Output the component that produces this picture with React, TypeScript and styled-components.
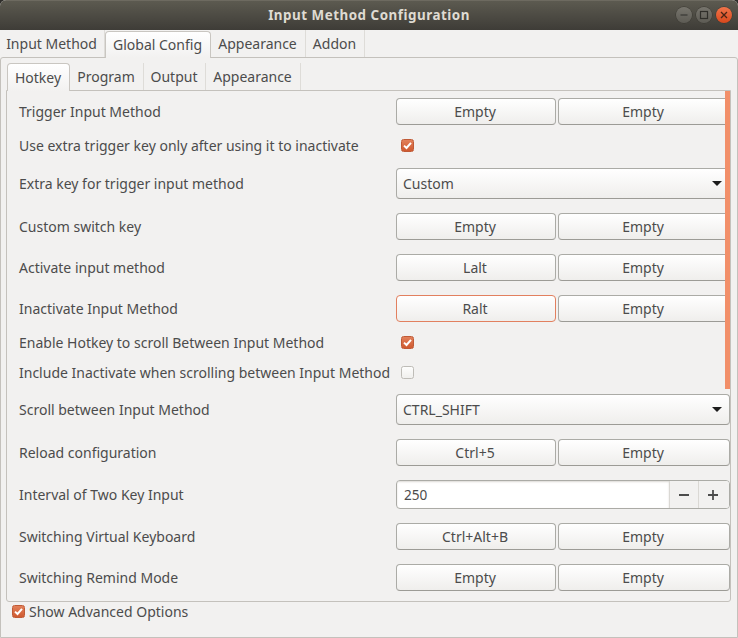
import React from "react";
import styled, { createGlobalStyle } from "styled-components";

const Global = createGlobalStyle`
  html, body { margin: 0; padding: 0; background: #2f2e2b; overflow: hidden; }
  * { box-sizing: border-box; }
`;

const FONT = `"Noto Sans", "Open Sans", sans-serif`;

const Win = styled.div`
  width: 738px;
  height: 638px;
  display: flex;
  flex-direction: column;
  background: #f2f1f0;
  font-family: ${FONT};
  font-size: 14px;
  color: #4c4c4c;
  border-radius: 6px 6px 0 0;
  overflow: hidden;
`;

const TitleBar = styled.div`
  height: 30px;
  flex: none;
  position: relative;
  display: flex;
  align-items: center;
  justify-content: center;
  padding-bottom: 2px;
  background: linear-gradient(#5c5a50, #3e3c37);
  border-top: 1px solid #6d6a60;
`;

const Title = styled.div`
  font-weight: 700;
  font-size: 13.4px;
  letter-spacing: 0.51px;
  color: #dfdbd2;
`;

const WinButtons = styled.div`
  position: absolute;
  right: 6px;
  top: 6px;
  display: flex;
  gap: 4px;
`;

const WinBtn = styled.div<{ $close?: boolean }>`
  width: 16px;
  height: 16px;
  border-radius: 50%;
  background: ${(p) => (p.$close ? "linear-gradient(#f0744a, #d9481c)" : "linear-gradient(#77756d, #5d5b54)")};
  box-shadow: 0 0 0 0.5px #38362f;
  display: flex;
  align-items: center;
  justify-content: center;
`;

const TabStrip = styled.div<{ $inset?: number; $height: number }>`
  display: flex;
  flex: none;
  height: ${(p) => p.$height}px;
  padding-left: ${(p) => p.$inset ?? 0}px;
`;

const Tab = styled.div<{ $active?: boolean; $w: number; $drop?: number }>`
  width: ${(p) => p.$w}px;
  display: flex;
  align-items: center;
  justify-content: center;
  padding-right: 1px;
  padding-bottom: ${(p) => p.$drop ?? 0}px;
  font-size: 14px;
  position: relative;
  z-index: ${(p) => (p.$active ? 1 : 0)};
  margin-top: ${(p) => p.$drop ?? 0}px;
  margin-bottom: ${(p) => (p.$active ? "-1px" : "0")};
  ${(p) =>
    p.$active
      ? `
    background: linear-gradient(#ffffff, #f2f1f0);
    border: 1px solid #c9c6c1;
    border-bottom: none;
    border-radius: 4px 4px 0 0;
  `
      : `
    border-right: 1px solid #dedcd8;
  `}
`;

const OuterPanel = styled.div`
  flex: 1;
  display: flex;
  flex-direction: column;
  border: 1px solid #c4c1bc;
  border-radius: 3px 3px 0 0;
  padding: 5px 6px 0 5px;
  min-height: 0;
`;

const InnerPanel = styled.div`
  height: 512px;
  flex: none;
  position: relative;
  border: 1px solid #c4c1bc;
  border-radius: 0 0 3px 3px;
  padding: 7px 0 0 12px;
  display: flex;
  flex-direction: column;
`;

const Scrollbar = styled.div`
  position: absolute;
  right: 0;
  top: 0;
  width: 5px;
  height: 298px;
  background: #f28f69;
`;

const Row = styled.div<{ $gap: number; $h: number }>`
  display: grid;
  grid-template-columns: 377px 334px;
  align-items: center;
  height: ${(p) => p.$h}px;
  margin-top: ${(p) => p.$gap}px;
  flex: none;
`;

const Label = styled.div`
  white-space: nowrap;
  font-size: 14px;
`;

const KeyPair = styled.div`
  display: grid;
  grid-template-columns: 160px 172px;
  gap: 2px;
  height: 100%;
`;

const KeyButton = styled.div<{ $focus?: boolean }>`
  display: flex;
  align-items: center;
  justify-content: center;
  height: 100%;
  padding-right: 2px;
  border: 1px solid ${(p) => (p.$focus ? "#e2805f" : "#ababa6")};
  border-bottom-color: ${(p) => (p.$focus ? "#e2805f" : "#9c9b96")};
  border-radius: 4px;
  background: linear-gradient(#ffffff, #efeeec);
  font-size: 14px;
`;

const CheckSlot = styled.div`
  padding-left: 5px;
  display: flex;
  align-items: center;
`;

const Box = styled.div<{ $on: boolean }>`
  width: 13px;
  height: 13px;
  border-radius: 2.5px;
  flex: none;
  display: flex;
  align-items: center;
  justify-content: center;
  ${(p) =>
    p.$on
      ? `background: linear-gradient(#e2805a, #cf5a30); border: 1px solid #c05a36;`
      : `background: linear-gradient(#fdfdfc, #f0efed); border: 1px solid #bebcb7;`}
`;

const Combo = styled.div`
  height: 100%;
  display: flex;
  align-items: center;
  justify-content: space-between;
  padding: 0 7px 0 6px;
  border: 1px solid #ababa6;
  border-bottom-color: #9c9b96;
  border-radius: 4px;
  background: linear-gradient(#ffffff, #efeeec);
`;

const Arrow = styled.div`
  width: 0;
  height: 0;
  border-left: 5px solid transparent;
  border-right: 5px solid transparent;
  border-top: 5px solid #1c1c1c;
`;

const Spin = styled.div`
  height: 100%;
  display: flex;
  border: 1px solid #ababa6;
  border-radius: 4px;
  overflow: hidden;
  background: #ffffff;
`;

const SpinValue = styled.div`
  flex: 1;
  display: flex;
  align-items: center;
  padding-left: 7px;
  font-size: 13.6px;
  box-shadow: inset 0 1px 2px #dcdad6;
`;

const SpinBtn = styled.div<{ $w: number; $shift: number }>`
  width: ${(p) => p.$w}px;
  display: flex;
  align-items: center;
  justify-content: center;
  padding-right: ${(p) => p.$shift}px;
  background: #f2f1f0;
  border-left: 1px solid #dad8d4;
`;

const Advanced = styled.div`
  display: flex;
  align-items: center;
  gap: 4px;
  padding-left: 6px;
  height: 19px;
`;

const CheckMark = () => (
  <svg width="11" height="11" viewBox="0 0 11 11">
    <path d="M2 5.6 L4.5 8 L9 2.8" fill="none" stroke="#ffffff" strokeWidth="2" />
  </svg>
);

type Item =
  | { kind: "keys"; label: string; a: string; b: string; gap: number; focus?: boolean }
  | { kind: "check"; label: string; on: boolean; gap: number }
  | { kind: "combo"; label: string; value: string; gap: number }
  | { kind: "spin"; label: string; value: string; gap: number };

const rows: Item[] = [
  { kind: "keys", label: "Trigger Input Method", a: "Empty", b: "Empty", gap: 0 },
  { kind: "check", label: "Use extra trigger key only after using it to inactivate", on: true, gap: 11 },
  { kind: "combo", label: "Extra key for trigger input method", value: "Custom", gap: 14 },
  { kind: "keys", label: "Custom switch key", a: "Empty", b: "Empty", gap: 14 },
  { kind: "keys", label: "Activate input method", a: "Lalt", b: "Empty", gap: 14 },
  { kind: "keys", label: "Inactivate Input Method", a: "Ralt", b: "Empty", gap: 14, focus: true },
  { kind: "check", label: "Enable Hotkey to scroll Between Input Method", on: true, gap: 11 },
  { kind: "check", label: "Include Inactivate when scrolling between Input Method", on: false, gap: 12 },
  { kind: "combo", label: "Scroll between Input Method", value: "CTRL_SHIFT", gap: 13 },
  { kind: "keys", label: "Reload configuration", a: "Ctrl+5", b: "Empty", gap: 14 },
  { kind: "spin", label: "Interval of Two Key Input", value: "250", gap: 14 },
  { kind: "keys", label: "Switching Virtual Keyboard", a: "Ctrl+Alt+B", b: "Empty", gap: 14 },
  { kind: "keys", label: "Switching Remind Mode", a: "Empty", b: "Empty", gap: 14 },
];

const heights = { keys: 27, check: 18, combo: 31, spin: 29 };

export default function App() {
  return (
    <Win>
      <Global />
      <TitleBar>
        <Title>Input Method Configuration</Title>
        <WinButtons>
          <WinBtn>
            <svg width="10" height="10" viewBox="0 0 10 10">
              <path d="M1.5 5 H8.5" stroke="#2f2e2a" strokeWidth="1.2" />
            </svg>
          </WinBtn>
          <WinBtn>
            <svg width="10" height="10" viewBox="0 0 10 10">
              <rect x="1.5" y="1.5" width="7" height="7" fill="none" stroke="#2f2e2a" strokeWidth="1.2" />
            </svg>
          </WinBtn>
          <WinBtn $close>
            <svg width="10" height="10" viewBox="0 0 10 10">
              <path d="M2 2 L8 8 M8 2 L2 8" stroke="#4a2415" strokeWidth="1.3" />
            </svg>
          </WinBtn>
        </WinButtons>
      </TitleBar>

      <TabStrip $height={27}>
        <Tab $w={105}>Input Method</Tab>
        <Tab $active $w={106} $drop={1}>Global Config</Tab>
        <Tab $w={95}>Appearance</Tab>
        <Tab $w={59}>Addon</Tab>
      </TabStrip>

      <OuterPanel>
        <TabStrip $height={27} $inset={1}>
          <Tab $active $w={63}>Hotkey</Tab>
          <Tab $w={74}>Program</Tab>
          <Tab $w={62}>Output</Tab>
          <Tab $w={95}>Appearance</Tab>
        </TabStrip>
        <InnerPanel>
          {rows.map((r) => (
            <Row key={r.label} $gap={r.gap} $h={heights[r.kind]}>
              <Label>{r.label}</Label>
              {r.kind === "keys" && (
                <KeyPair>
                  <KeyButton $focus={r.focus}>{r.a}</KeyButton>
                  <KeyButton>{r.b}</KeyButton>
                </KeyPair>
              )}
              {r.kind === "check" && (
                <CheckSlot>
                  <Box $on={r.on}>{r.on && <CheckMark />}</Box>
                </CheckSlot>
              )}
              {r.kind === "combo" && (
                <Combo>
                  {r.value}
                  <Arrow />
                </Combo>
              )}
              {r.kind === "spin" && (
                <Spin>
                  <SpinValue>{r.value}</SpinValue>
                  <SpinBtn $w={29} $shift={1}>
                    <svg width="12" height="12" viewBox="0 0 12 12">
                      <path d="M1 6 H11" stroke="#4c4c4c" strokeWidth="1.8" />
                    </svg>
                  </SpinBtn>
                  <SpinBtn $w={31} $shift={2}>
                    <svg width="12" height="12" viewBox="0 0 12 12">
                      <path d="M1 6 H11 M6 1 V11" stroke="#4c4c4c" strokeWidth="1.8" />
                    </svg>
                  </SpinBtn>
                </Spin>
              )}
            </Row>
          ))}
          <Scrollbar />
        </InnerPanel>
        <Advanced>
          <Box $on>
            <CheckMark />
          </Box>
          Show Advanced Options
        </Advanced>
      </OuterPanel>
    </Win>
  );
}
